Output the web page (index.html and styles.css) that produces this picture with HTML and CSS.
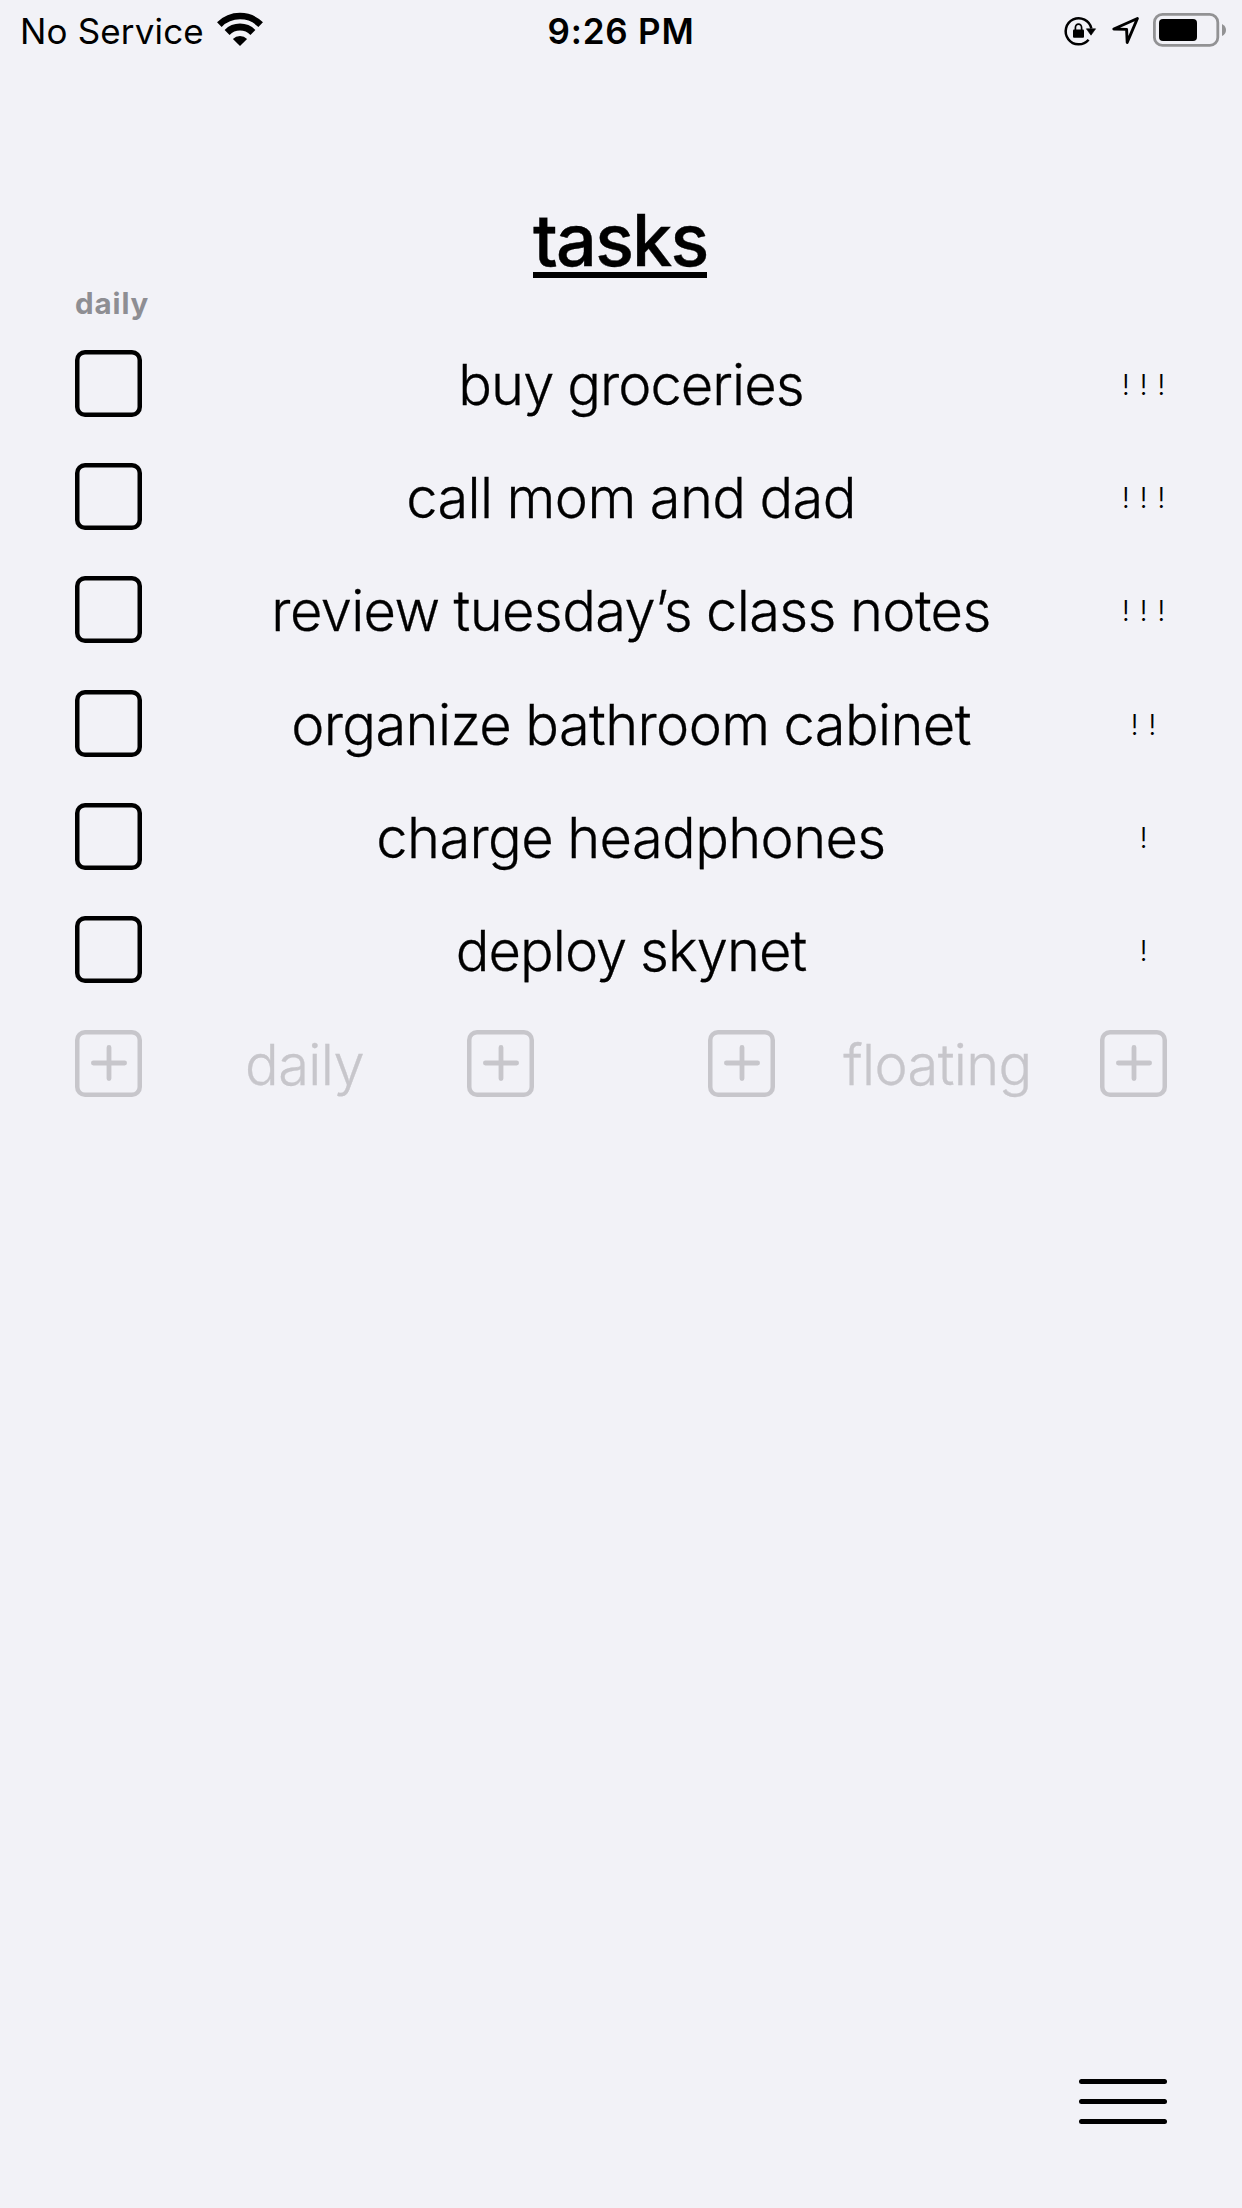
FILE: index.html
```
<!DOCTYPE html>
<html lang="en">
<head>
<meta charset="utf-8">
<title>tasks</title>
<link rel="stylesheet" href="styles.css">
</head>
<body>
<div class="screen">
  <header class="status">
    <div class="status-left">
      <span class="carrier">No Service</span>
      <svg class="wifi" viewBox="0 0 48 36" aria-hidden="true">
        <path d="M3.35 12.65A29.2 29.2 0 0 1 44.65 12.65" fill="none" stroke="#000" stroke-width="6.5"/>
        <path d="M11.1 20.4A18.25 18.25 0 0 1 36.9 20.4" fill="none" stroke="#000" stroke-width="7"/>
        <path d="M24 34L16.9 26.9A10 10 0 0 1 31.1 26.9Z"/>
      </svg>
    </div>
    <span class="clock">9:26 PM</span>
    <div class="status-right">
      <svg class="lock" viewBox="0 0 34 32" aria-hidden="true">
        <path d="M25.6 24.7A13 13 0 1 1 28.4 13.5" fill="none" stroke="#000" stroke-width="2.5"/>
        <path d="M23.4 13.8H32.6L28 20.2Z" stroke="#000" stroke-width=".6" stroke-linejoin="round"/>
        <rect x="10" y="14.6" width="11" height="8.2" rx="1"/>
        <path d="M12.4 15V12.7a3.1 3.6 0 0 1 6.2 0V15" fill="none" stroke="#000" stroke-width="1.7"/>
      </svg>
      <svg class="location" viewBox="0 0 30 30" aria-hidden="true">
        <path d="M2.8 13L26.4 2.5L16.2 26.4L15.6 13.4Z" fill="none" stroke="#000" stroke-width="2.9" stroke-linejoin="round"/>
      </svg>
      <svg class="battery" viewBox="0 0 74 34" aria-hidden="true">
        <rect x="1.4" y="1.4" width="63.4" height="31" rx="8" fill="none" stroke="#929294" stroke-width="2.8"/>
        <rect x="6" y="6" width="38" height="22" rx="4"/>
        <path d="M69 11Q73 13 73 17T69 23Z" fill="#929294"/>
      </svg>
    </div>
  </header>

  <h1 class="title"><span>tasks</span></h1>
  <h2 class="section">daily</h2>

  <ul class="tasks">
    <li class="row"><span class="box"></span><span class="name tight">buy groceries</span><span class="priority">!!!</span></li>
    <li class="row"><span class="box"></span><span class="name">call mom and dad</span><span class="priority">!!!</span></li>
    <li class="row"><span class="box"></span><span class="name">review tuesday’s class notes</span><span class="priority">!!!</span></li>
    <li class="row"><span class="box"></span><span class="name">organize bathroom cabinet</span><span class="priority">!!</span></li>
    <li class="row"><span class="box"></span><span class="name">charge headphones</span><span class="priority">!</span></li>
    <li class="row"><span class="box"></span><span class="name tight">deploy skynet</span><span class="priority">!</span></li>
  </ul>

  <div class="add">
    <div class="add-group">
      <span class="box"><svg class="plus" viewBox="0 0 36 36"><path d="M2.4 18H33.6M18 2.4V33.6"/></svg></span>
      <span class="name">daily</span>
      <span class="box"><svg class="plus" viewBox="0 0 36 36"><path d="M2.4 18H33.6M18 2.4V33.6"/></svg></span>
    </div>
    <div class="add-group">
      <span class="box"><svg class="plus" viewBox="0 0 36 36"><path d="M2.4 18H33.6M18 2.4V33.6"/></svg></span>
      <span class="name">floating</span>
      <span class="box"><svg class="plus" viewBox="0 0 36 36"><path d="M2.4 18H33.6M18 2.4V33.6"/></svg></span>
    </div>
  </div>

  <div class="menu"><i></i><i></i><i></i></div>
</div>
</body>
</html>
```
FILE: styles.css
```
* { box-sizing: border-box; }
body { margin: 0; background: #f2f2f7; }

.screen {
  display: flex;
  flex-direction: column;
  width: 1242px;
  height: 2208px;
  color: #000;
  font-family: Inter, "Liberation Sans", sans-serif;
}

/* status bar */
.status {
  display: grid;
  grid-template-columns: 1fr auto 1fr;
  height: 60px;
  padding: 0 15px 0 20px;
  font-size: 35px;
  line-height: 63px;
}
.status-left { display: flex; align-items: flex-start; gap: 12px; }
.carrier { letter-spacing: .15px; }
.wifi { width: 48px; height: 36px; margin-top: 12px; }
.clock { font-weight: 600; letter-spacing: .8px; margin-right: 5px; }
.status-right { display: flex; justify-content: flex-end; align-items: flex-start; }
.lock { width: 34px; height: 32px; margin-top: 15px; }
.location { width: 30px; height: 30px; margin: 16px 12px 0 14px; }
.battery { width: 74px; height: 34px; margin-top: 13px; }

/* heading */
.title {
  display: flex;
  justify-content: center;
  margin: 137px 2px 0 0;
  font-size: 72px;
  font-weight: 500;
  line-height: 86px;
}
.title span {
  width: 174px;
  height: 81px;
  border-bottom: 6px solid #000;
  letter-spacing: -1.8px;
  white-space: nowrap;
  -webkit-text-stroke: .4px currentColor;
}
.section {
  margin: 8px 75px 0;
  color: #8e8e93;
  font-size: 29.5px;
  font-weight: 700;
  line-height: 35px;
  letter-spacing: .9px;
}

/* task list */
.tasks { margin: 5.4px 0 0; padding: 0 75px; list-style: none; }
.row { display: flex; align-items: center; height: 113.33px; }
.box {
  display: flex;
  flex: none;
  align-items: center;
  justify-content: center;
  width: 67px;
  height: 67px;
  border-radius: 10px;
  box-shadow: inset 0 0 0 4.5px currentColor;
}
.name {
  flex: 1;
  padding-top: 3.4px;
  font-size: 56px;
  font-weight: 300;
  line-height: 72px;
  letter-spacing: -.62px;
  word-spacing: -1px;
  text-align: center;
  white-space: nowrap;
  -webkit-text-stroke: .3px currentColor;
}
.name.tight { letter-spacing: -.95px; }
.priority {
  display: flex;
  justify-content: center;
  width: 47px;
  padding-top: 3.4px;
  font-size: 29px;
  font-weight: 300;
  line-height: 36px;
  letter-spacing: 9.6px;
  text-indent: 9.6px;
}

/* add row */
.add { display: flex; justify-content: space-between; height: 113.33px; padding: 0 75px; color: #c7c6cb; }
.add-group { display: flex; align-items: center; width: 459px; }
.plus { width: 36px; height: 36px; fill: none; stroke: currentColor; stroke-width: 4.8; stroke-linecap: round; }

/* menu button */
.menu { display: flex; flex-direction: column; gap: 15px; width: 88px; margin: auto 75px 84px auto; }
.menu i { height: 5px; border-radius: 2.5px; background: #000; }
```
